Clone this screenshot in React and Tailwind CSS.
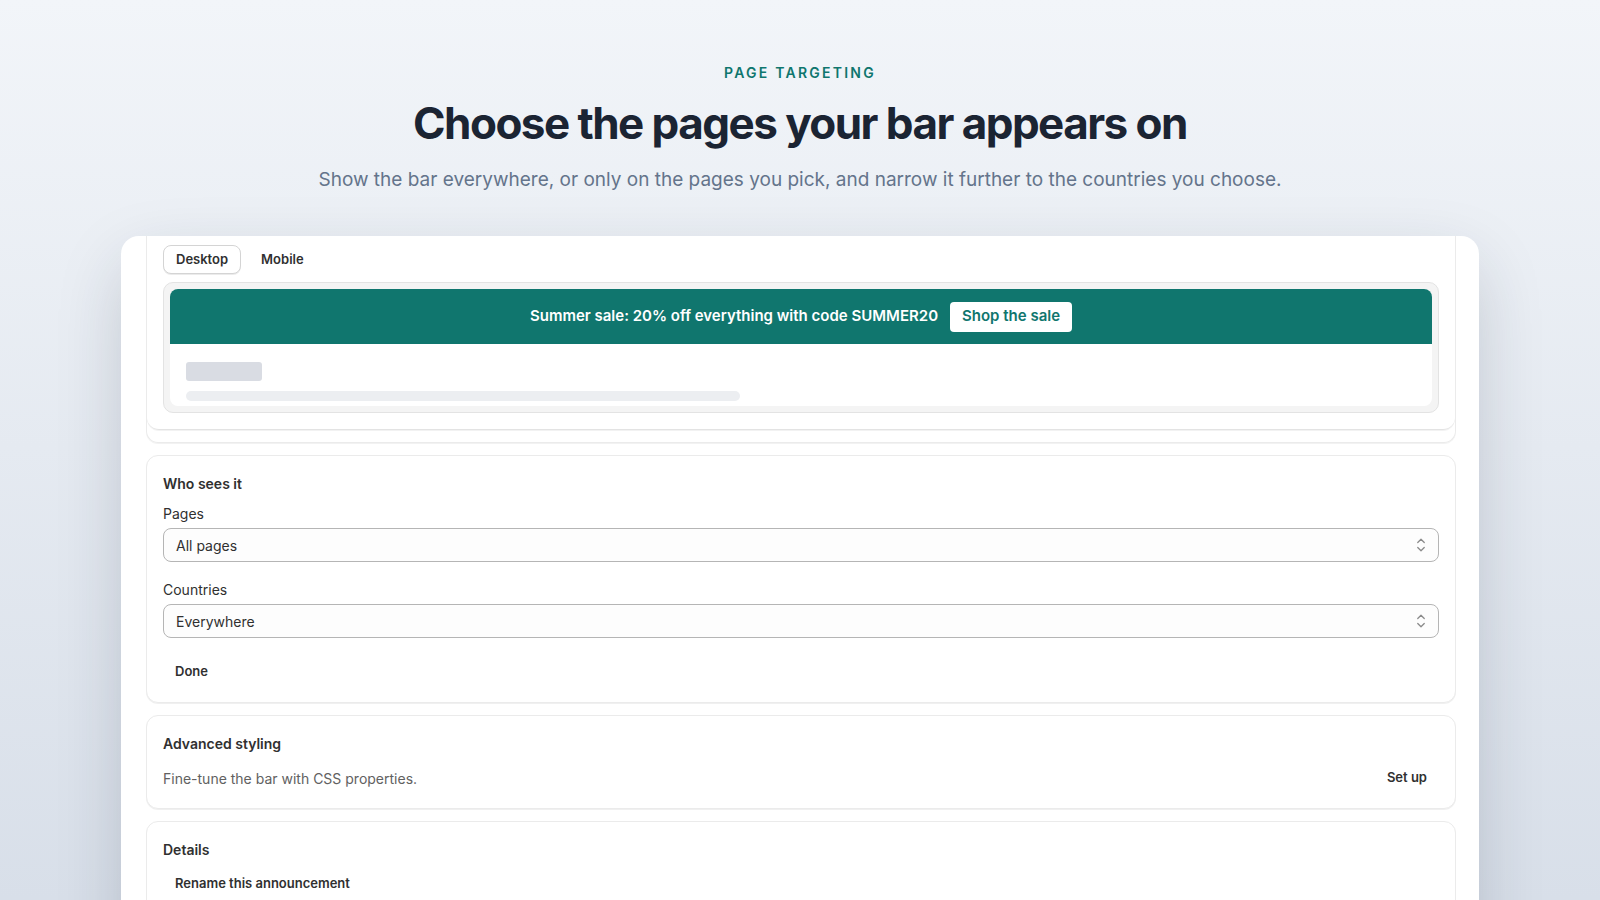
import { useState } from 'react';

const font = { fontFamily: 'Inter, "Noto Sans", sans-serif' };

function UpDownIcon() {
  return (
    <svg width="16" height="16" viewBox="0 0 16 16" fill="none" stroke="#8a8a8a" strokeWidth="1.25" strokeLinecap="round" strokeLinejoin="round">
      <path d="M4.75 5.5 8 2.25l3.25 3.25" />
      <path d="M4.75 10.5 8 13.75l3.25-3.25" />
    </svg>
  );
}

function SelectField({ label, value }) {
  return (
    <div className="flex flex-col">
      <div className="text-[14px] leading-5 text-[#303030]">{label}</div>
      <div className="mt-[4px] flex h-[34px] items-center justify-between rounded-[8px] border border-[#b5b5b5] bg-[#fdfdfd] pl-3 pr-[9px]">
        <span className="text-[14px] text-[#303030]">{value}</span>
        <UpDownIcon />
      </div>
    </div>
  );
}

function PlainButton({ children }) {
  return (
    <button className="flex h-7 items-center rounded-lg px-3 text-[13px] font-semibold text-[#303030]">
      {children}
    </button>
  );
}

function Card({ children, className = '' }) {
  return (
    <div className={`rounded-xl border border-[#ebebeb] bg-white px-4 shadow-[0_1px_0_rgba(0,0,0,0.06)] ${className}`}>
      {children}
    </div>
  );
}

function PreviewCard() {
  const [device, setDevice] = useState('desktop');

  return (
    // the preview card is scrolled up, so only its lower part shows
    <div className="rounded-b-xl border-x border-b border-[#ebebeb] pb-3 shadow-[0_1px_0_rgba(0,0,0,0.05)]">
      <div className="rounded-b-xl border-b border-[#e3e3e3] px-4 pb-4 pt-[9px] shadow-[0_1px_0_rgba(0,0,0,0.05)]">
        <div className="flex gap-2">
          <button
            onClick={() => setDevice('desktop')}
            className={`h-[29px] rounded-lg px-3 text-[13px] font-semibold text-[#303030] ${
              device === 'desktop' ? 'border border-[#d4d4d4] bg-white shadow-[0_1px_0_rgba(0,0,0,0.08)]' : ''
            }`}
          >
            Desktop
          </button>
          <button
            onClick={() => setDevice('mobile')}
            className={`h-[29px] rounded-lg px-3 text-[13px] font-semibold text-[#303030] ${
              device === 'mobile' ? 'border border-[#d4d4d4] bg-white shadow-[0_1px_0_rgba(0,0,0,0.08)]' : ''
            }`}
          >
            Mobile
          </button>
        </div>

        <div className="mt-2 rounded-[10px] border border-[#e3e3e3] bg-[#f4f4f4] p-[6px]">
          <div className="overflow-hidden rounded-[8px] bg-white">
            <div className="flex h-[55px] items-center justify-center gap-3 bg-[#10766e]">
              <span className="text-[15px] font-semibold text-white">
                Summer sale: 20% off everything with code SUMMER20
              </span>
              <button className="h-[30px] rounded-[4px] bg-white px-3 text-[15px] font-semibold text-[#10766e]">
                Shop the sale
              </button>
            </div>
            <div className="px-4 pb-[5px] pt-[18px]">
              <div className="h-[19px] w-[76px] rounded-[3px] bg-[#d9dce3]" />
              <div className="mt-[10px] h-[10px] w-[554px] rounded-full bg-[#eceef1]" />
            </div>
          </div>
        </div>
      </div>
    </div>
  );
}

export default function App() {
  return (
    <div className="h-screen overflow-hidden bg-linear-to-b from-[#f2f5f9] to-[#d8dfe9]" style={font}>
      <div className="flex flex-col items-center pt-[63px]">
        <div className="text-[14px] font-semibold uppercase leading-5 tracking-[0.16em] text-[#0f766e]">
          Page targeting
        </div>
        <h1 className="mt-[15px] text-[44px] font-bold leading-[50px] tracking-[-0.035em] text-[#1b2433]">
          Choose the pages your bar appears on
        </h1>
        <p className="mt-[18px] text-[19px] leading-7 text-[#64748b]">
          Show the bar everywhere, or only on the pages you pick, and narrow it further to the countries you choose.
        </p>
      </div>

      <div className="mx-auto mt-[42px] w-[1358px] overflow-hidden rounded-t-[18px] bg-white pl-[25px] pr-[23px] shadow-[0_24px_70px_-8px_rgba(30,41,59,0.22)]">
        <PreviewCard />

        <div className="mt-3 flex flex-col gap-3 pb-6">
          <Card className="pb-4 pt-[18px]">
            <div className="text-[14px] font-semibold leading-5 text-[#303030]">Who sees it</div>
            <div className="mt-[10px]">
              <SelectField label="Pages" value="All pages" />
            </div>
            <div className="mt-[18px]">
              <SelectField label="Countries" value="Everywhere" />
            </div>
            <div className="mt-[20px]">
              <PlainButton>Done</PlainButton>
            </div>
          </Card>

          <Card className="pb-4 pt-[18px]">
            <div className="text-[14px] font-semibold leading-5 text-[#303030]">Advanced styling</div>
            <div className="mt-[10px] flex h-7 items-center justify-between">
              <span className="text-[14px] text-[#616161]">Fine-tune the bar with CSS properties.</span>
              <PlainButton>Set up</PlainButton>
            </div>
          </Card>

          <Card className="pb-4 pt-[18px]">
            <div className="text-[14px] font-semibold leading-5 text-[#303030]">Details</div>
            <div className="mt-[10px]">
              <PlainButton>Rename this announcement</PlainButton>
            </div>
            <div className="mt-3 h-[80px]" />
          </Card>
        </div>
      </div>
    </div>
  );
}
